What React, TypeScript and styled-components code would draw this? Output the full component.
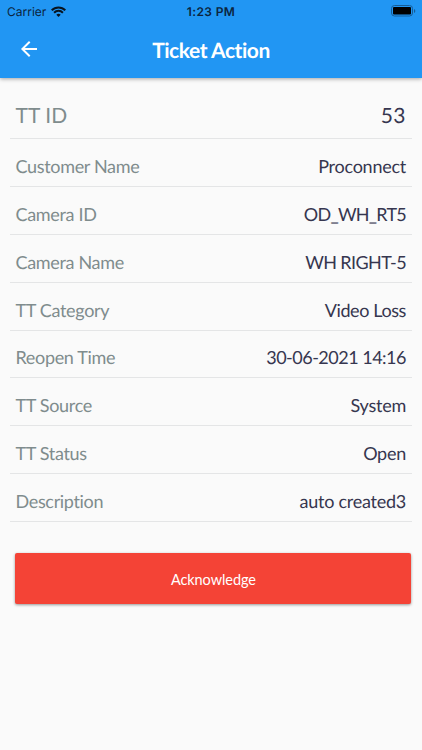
import React from "react";
import styled, { createGlobalStyle } from "styled-components";

const GlobalStyle = createGlobalStyle`
  * { box-sizing: border-box; }
  body { margin: 0; background: #fafafa; }
`;

const Screen = styled.main`
  width: 422px;
  height: 750px;
  overflow: hidden;
  background: #fafafa;
  font-family: Lato, sans-serif;
  text-rendering: geometricPrecision;
`;

const Header = styled.header`
  height: 77.5px;
  background: #2196f3;
  box-shadow: 0 1px 4px rgba(0, 0, 0, 0.35);
`;

const StatusBar = styled.div`
  display: grid;
  grid-template-columns: 1fr auto 1fr;
  align-items: center;
  height: 22px;
  padding: 0 7px;
  color: #0b2540;
  font: 12px Inter, sans-serif;
`;

const Carrier = styled.div`
  display: flex;
  align-items: center;
  gap: 5px;
`;

const Clock = styled.span`
  font-weight: 600;
  letter-spacing: 0.35px;
`;

const BatteryIcon = styled.svg`
  justify-self: end;
  margin-right: -0.5px;
`;

const Toolbar = styled.div`
  display: grid;
  grid-template-columns: 60px 1fr 60px;
  align-items: center;
  height: 55px;
`;

const BackButton = styled.button`
  display: flex;
  padding: 0 0 1px 17px;
  border: 0;
  background: none;
`;

const Title = styled.h1`
  margin: 0;
  padding-top: 2px;
  color: #fff;
  font-size: 21px;
  font-weight: 700;
  line-height: 26px;
  letter-spacing: -0.44px;
  text-align: center;
  white-space: nowrap;
`;

const Details = styled.dl`
  margin: 12.5px 10px 0;
`;

const Row = styled.div<{ $large?: boolean }>`
  display: flex;
  justify-content: space-between;
  align-items: center;
  height: ${(p) => (p.$large ? 49 : 47.88)}px;
  padding: ${(p) => (p.$large ? 2 : 7)}px 6px 0 5.5px;
  border-bottom: 1px solid #e4e5e6;
  font-size: ${(p) => (p.$large ? 21 : 18)}px;
`;

const Label = styled.dt<{ $tracking?: number }>`
  color: #7f8c8d;
  letter-spacing: ${(p) => p.$tracking ?? -0.33}px;
`;

const Value = styled.dd<{ $tracking?: number }>`
  margin: 0;
  color: #36364f;
  letter-spacing: ${(p) => p.$tracking ?? -0.25}px;
`;

const ActionButton = styled.button`
  display: block;
  height: 51px;
  width: 396px;
  margin: 31px auto 0 15.4px;
  padding: 1px 0 0;
  border: 0;
  border-radius: 2px;
  background: #f44336;
  box-shadow: 0 1px 3px rgba(0, 0, 0, 0.4);
  color: #fff;
  font: 14.5px Lato, sans-serif;
  letter-spacing: -0.08px;
`;

interface Detail {
  label: string;
  value: string;
  large?: boolean;
  labelTracking?: number;
  valueTracking?: number;
}

const details: Detail[] = [
  { label: "TT ID", value: "53", large: true, labelTracking: 0.1, valueTracking: 0.5 },
  { label: "Customer Name", value: "Proconnect" },
  { label: "Camera ID", value: "OD_WH_RT5", valueTracking: -0.75 },
  { label: "Camera Name", value: "WH RIGHT-5", valueTracking: -0.6 },
  { label: "TT Category", value: "Video Loss", valueTracking: -0.4 },
  { label: "Reopen Time", value: "30-06-2021 14:16", valueTracking: -0.5 },
  { label: "TT Source", value: "System" },
  { label: "TT Status", value: "Open" },
  { label: "Description", value: "auto created3" },
];

export default function App() {
  return (
    <Screen>
      <GlobalStyle />
      <Header>
        <StatusBar>
          <Carrier>
            Carrier
            <svg width="15" height="11" viewBox="0 0 15 11" fill="none" stroke="#081420" strokeWidth="2">
              <path d="M.7 4.2a9.6 9.6 0 0 1 13.6 0M3.1 6.7a6.2 6.2 0 0 1 8.8 0" />
              <path d="M7.5 11 5.3 8.8a3.1 3.1 0 0 1 4.4 0Z" fill="#081420" stroke="none" />
            </svg>
          </Carrier>
          <Clock>1:23 PM</Clock>
          <BatteryIcon width="25" height="12" viewBox="0 0 25 12">
            <rect x=".5" y=".5" width="21" height="10.5" rx="3" fill="none" stroke="#165d97" />
            <rect x="2" y="2" width="18" height="7.5" rx="1" fill="#000" />
            <path d="M23 4v4q1.3-.6 1.3-2T23 4Z" fill="#165d97" />
          </BatteryIcon>
        </StatusBar>
        <Toolbar>
          <BackButton aria-label="Back">
            <svg width="24" height="24" viewBox="0 0 24 24" fill="#fff">
              <path d="M20 11H7.83l5.59-5.59L12 4l-8 8 8 8 1.41-1.41L7.83 13H20v-2z" />
            </svg>
          </BackButton>
          <Title>Ticket Action</Title>
        </Toolbar>
      </Header>
      <Details>
        {details.map((item) => (
          <Row key={item.label} $large={item.large}>
            <Label $tracking={item.labelTracking}>{item.label}</Label>
            <Value $tracking={item.valueTracking}>{item.value}</Value>
          </Row>
        ))}
      </Details>
      <ActionButton>Acknowledge</ActionButton>
    </Screen>
  );
}
